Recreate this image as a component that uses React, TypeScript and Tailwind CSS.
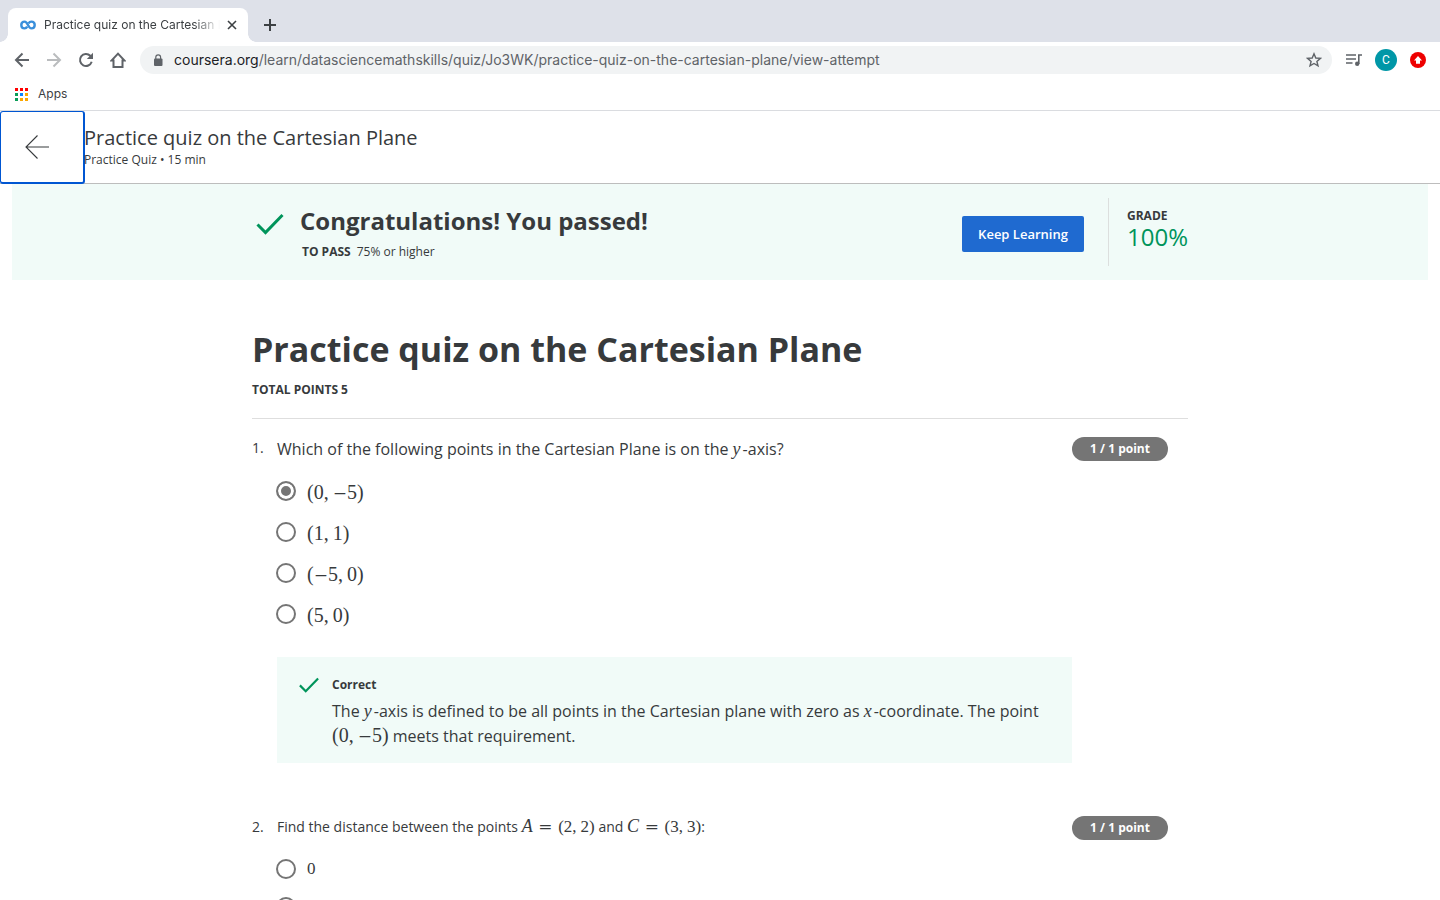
import type { ReactNode } from "react";

type Choice = { id: string; label: ReactNode; checked?: boolean };

function Sym({ children }: { children: ReactNode }) {
  return <span className="mr-[2px] font-['Liberation_Serif',serif] text-[18px] leading-none italic">{children}</span>;
}

function Op({ children }: { children: string }) {
  return <span className="font-['DejaVu_Serif',serif] text-[17px] leading-none">{children}</span>;
}

function Equals() {
  return (
    <span className="mr-[2px]">
      <Op>=</Op>
    </span>
  );
}

function Pair({ a, b, small }: { a: string; b: string; small?: boolean }) {
  const value = (v: string) => (v.startsWith("−") ? <><Op>−</Op>{v.slice(1)}</> : v);
  return (
    <span
      className={
        small
          ? "font-['Liberation_Serif',serif] text-[17px] leading-none whitespace-nowrap"
          : "font-['Liberation_Serif',serif] text-[20px] leading-none whitespace-nowrap"
      }
    >
      ({value(a)},<span className="ml-1">{value(b)}</span>)
    </span>
  );
}

function Check({ className }: { className: string }) {
  return (
    <svg viewBox="0 0 28 22" fill="none" stroke="#00945b" strokeWidth="3" className={className} aria-hidden="true">
      <path d="M1.5 11.5 L9.5 19.5 L26.5 2" />
    </svg>
  );
}

function BrowserTabs() {
  return (
    <div className="flex h-[42px] shrink-0 items-end bg-[#dee1e9] pl-2">
      <div className="relative flex h-[34px] w-60 items-center rounded-t-lg bg-white pr-2 pl-3">
        <span className="absolute bottom-0 -left-2 size-2 bg-[radial-gradient(circle_at_0_0,transparent_7.5px,white_8px)]" />
        <span className="absolute -right-2 bottom-0 size-2 bg-[radial-gradient(circle_at_100%_0,transparent_7.5px,white_8px)]" />
        <svg viewBox="0 0 16 10" className="h-[10px] w-4 shrink-0" fill="none" stroke="#3a8fdb" strokeWidth="2.4" aria-hidden="true">
          <path d="M7.2 6.6 C6.6 7.8 5.8 8.4 4.6 8.4 C2.7 8.4 1.3 7 1.3 5 S2.7 1.6 4.7 1.6 C7.8 1.6 8.2 8.4 11.3 8.4 C13.3 8.4 14.7 7 14.7 5 S13.3 1.6 11.3 1.6 C10 1.6 9.2 2.3 8.6 3.4" />
        </svg>
        <span className="ml-2 flex-1 overflow-hidden text-[12px] whitespace-nowrap text-[#3c4043] [mask-image:linear-gradient(to_right,black_85%,transparent)]">
          Practice quiz on the Cartesian Plane
        </span>
        <button type="button" aria-label="Close tab" className="ml-1 flex size-4 items-center justify-center">
          <svg viewBox="0 0 10 10" className="size-[10px]" stroke="#3c4043" strokeWidth="1.6" aria-hidden="true">
            <path d="M1 1 L9 9 M9 1 L1 9" />
          </svg>
        </button>
      </div>
      <button type="button" aria-label="New tab" className="ml-3 flex h-[34px] w-5 items-center justify-center">
        <svg viewBox="0 0 12 12" className="size-3" stroke="#3c4043" strokeWidth="2" aria-hidden="true">
          <path d="M6 0 V12 M0 6 H12" />
        </svg>
      </button>
    </div>
  );
}

function Toolbar() {
  return (
    <div className="flex h-9 shrink-0 items-center pr-[13px] pl-[10px]">
      <div className="flex gap-2">
        <button type="button" aria-label="Back" className="size-6 p-1">
          <svg viewBox="0 0 16 16" fill="none" stroke="#5f6368" strokeWidth="2" aria-hidden="true">
            <path d="M15 8 H2.5 M8.5 1.5 L2 8 L8.5 14.5" />
          </svg>
        </button>
        <button type="button" aria-label="Forward" className="size-6 p-1">
          <svg viewBox="0 0 16 16" fill="none" stroke="#babcbe" strokeWidth="2" aria-hidden="true">
            <path d="M1 8 H13.5 M7.5 1.5 L14 8 L7.5 14.5" />
          </svg>
        </button>
        <button type="button" aria-label="Reload" className="size-6 p-1">
          <svg viewBox="0 0 16 16" fill="none" stroke="#5f6368" strokeWidth="2" aria-hidden="true">
            <path d="M13.7 9.8 A6 6 0 1 1 12.3 3.8 L13.2 4.8" />
            <path d="M15 0.8 V7 H8.8 Z" fill="#5f6368" stroke="none" />
          </svg>
        </button>
        <button type="button" aria-label="Home" className="size-6 p-1">
          <svg viewBox="0 0 16 16" fill="none" stroke="#5f6368" strokeWidth="2" aria-hidden="true">
            <path d="M1.5 8.6 H3.5 V15 H12.5 V8.6 H14.5 L8 1.6 Z" />
          </svg>
        </button>
      </div>
      <div className="ml-[10px] flex h-7 flex-1 items-center rounded-full bg-[#f1f3f4] pr-[10px] pl-[13px]">
        <svg viewBox="0 0 10 13" className="h-[13px] w-[10px] shrink-0" aria-hidden="true">
          <rect x="1" y="4.5" width="8.5" height="7.5" rx="1" fill="#5f6368" />
          <path d="M2.8 5 V3.2 A2.4 2.4 0 0 1 7.6 3.2 V5" fill="none" stroke="#5f6368" strokeWidth="1.2" />
        </svg>
        <div className="ml-[11px] flex-1 truncate pb-[2px] text-[14px] text-[#5f6368]">
          <span className="text-[#202124]">coursera.org</span>
          /learn/datasciencemathskills/quiz/Jo3WK/practice-quiz-on-the-cartesian-plane/view-attempt
        </div>
        <button type="button" aria-label="Bookmark this page" className="size-4">
          <svg viewBox="0 0 16 16" fill="none" stroke="#5f6368" strokeWidth="1.4" aria-hidden="true">
            <path d="M8 1.8 L9.8 6 L14.4 6.4 L10.9 9.4 L12 13.9 L8 11.5 L4 13.9 L5.1 9.4 L1.6 6.4 L6.2 6 Z" />
          </svg>
        </button>
      </div>
      <button type="button" aria-label="Media controls" className="ml-[14px] h-3 w-4">
        <svg viewBox="0 0 16 12" fill="none" stroke="#5f6368" strokeWidth="1.6" aria-hidden="true">
          <path d="M0 1 H10 M0 5 H10 M0 9 H6.5 M12.8 10 V1 H16" />
          <circle cx="11.2" cy="9.7" r="2.2" fill="#5f6368" stroke="none" />
        </svg>
      </button>
      <button type="button" className="ml-[13px] flex size-[22px] items-center justify-center rounded-full bg-[#0097a7] font-[Roboto,sans-serif] text-[12px] text-white">
        C
      </button>
      <button type="button" aria-label="Update" className="ml-3 flex size-[18px] items-center justify-center">
        <svg viewBox="0 0 16 16" className="size-4" aria-hidden="true">
          <circle cx="8" cy="8" r="8" fill="#ee0000" />
          <path d="M8 4 L12 8.5 H10 V11.7 H6 V8.5 H4 Z" fill="white" />
        </svg>
      </button>
    </div>
  );
}

const dots = [
  "bg-[#f00]", "bg-[#f00]", "bg-[#f00]",
  "bg-[#0a9d58]", "bg-[#0a84ff]", "bg-[#fba700]",
  "bg-[#0a9d58]", "bg-[#fba700]", "bg-[#fba700]",
];

function Bookmarks() {
  return (
    <div className="flex h-[33px] shrink-0 items-center border-b border-[#dadce0] pl-[15px]">
      <a href="#apps" className="flex items-center gap-[10px] text-[12px] text-[#3c4043]">
        <span className="grid grid-cols-3 gap-[2px]">
          {dots.map((c, i) => (
            <span key={i} className={`size-[3px] ${c}`} />
          ))}
        </span>
        Apps
      </a>
    </div>
  );
}

function Question({ no, large, prompt, choices, feedback }: {
  no: number; large?: boolean; prompt: ReactNode; choices: Choice[]; feedback?: ReactNode;
}) {
  return (
    <section className="flex items-start pr-5">
      <span className="w-[25px] shrink-0 text-[14px] leading-[22px]">{no}.</span>
      <div className="flex-1">
        <p className={large ? "text-[16px] leading-6" : "pb-px text-[14px] leading-[22px]"}>{prompt}</p>
        <div className={large ? "mt-5 flex flex-col gap-[21px]" : "mt-5 flex flex-col gap-[18px]"}>
          {choices.map((c) => (
            <label key={c.id} className="-ml-px flex h-5 items-center gap-[11px]">
              <input
                type="radio"
                name={`question-${no}`}
                defaultChecked={c.checked}
                className="size-5 shrink-0 appearance-none rounded-full border-2 border-[#757575] bg-white checked:bg-[#757575] checked:shadow-[inset_0_0_0_3px_white]"
              />
              <span className={large ? "pt-1" : ""}>{c.label}</span>
            </label>
          ))}
        </div>
        {feedback}
      </div>
      <span className="flex h-6 w-24 shrink-0 items-center justify-center rounded-full bg-[#757575] text-[12px] font-bold text-white">
        1 / 1 point
      </span>
    </section>
  );
}

export default function App() {
  return (
    <div className="flex h-screen flex-col overflow-hidden bg-white font-['Open_Sans',sans-serif] text-[#373a3c]">
      <div className="font-[Inter,sans-serif]">
        <BrowserTabs />
        <Toolbar />
        <Bookmarks />
      </div>

      <header className="flex h-[73px] shrink-0 border-b border-[#bdbdbd]">
        <button type="button" aria-label="Back" className="-mb-px flex w-[85px] items-center rounded-[3px] border-2 border-t-1 border-l-1 border-[#0056d2] pl-6">
          <svg viewBox="0 0 24 24" className="size-6" fill="none" stroke="#373a3c" strokeWidth="1.1" aria-hidden="true">
            <path d="M24 12 H1 M12.5 0.5 L1 12 L12.5 23.5" />
          </svg>
        </button>
        <div className="-ml-px pt-[14px]">
          <h2 className="text-[20px] leading-[26px]">Practice quiz on the Cartesian Plane</h2>
          <p className="text-[12px] leading-[18px]">Practice Quiz • 15 min</p>
        </div>
      </header>

      <main className="min-h-0 flex-1 overflow-hidden">
        <div className="mx-3 h-24 bg-[#f1fbf8]">
          <div className="mx-auto flex h-full max-w-[936px] items-center">
            <Check className="mb-4 ml-1 h-[22px] w-7 shrink-0" />
            <div className="ml-4 flex-1 pt-[2px]">
              <h2 className="text-[24px] leading-8 font-bold">Congratulations! You passed!</h2>
              <p className="mt-[6px] ml-[2px] text-[12px] leading-[18px]">
                <strong>TO PASS</strong>
                <span className="ml-[6px]">75% or higher</span>
              </p>
            </div>
            <button type="button" className="mt-1 h-9 w-[122px] rounded-[2px] bg-[#1f6ad0] pt-[2px] text-[13px] font-semibold text-white">
              Keep Learning
            </button>
            <div className="ml-6 h-[68px] w-20 border-l border-[#dcdfde] pt-[11px] pl-[18px]">
              <p className="text-[12px] leading-[14px] font-bold">GRADE</p>
              <p className="text-[24px] leading-[28px] text-[#00945b]">100%</p>
            </div>
          </div>
        </div>

        <article className="mx-auto max-w-[936px] pt-[45px]">
          <h1 className="text-[34px] leading-[48px] font-bold">Practice quiz on the Cartesian Plane</h1>
          <p className="mt-2 text-[12px] leading-[18px] font-bold">TOTAL POINTS 5</p>
          <hr className="mt-[19px] mb-[18px] border-[#dedede]" />

          <Question
            no={1}
            large
            prompt={<>Which of the following points in the Cartesian Plane is on the <Sym>y</Sym>-axis?</>}
            choices={[
              { id: "a", label: <Pair a="0" b="−5" />, checked: true },
              { id: "b", label: <Pair a="1" b="1" /> },
              { id: "c", label: <Pair a="−5" b="0" /> },
              { id: "d", label: <Pair a="5" b="0" /> },
            ]}
            feedback={
              <div className="mt-[33px] mb-[53px] flex bg-[#f1fbf8] px-[21px] pt-[19px] pb-[14px]">
                <Check className="mt-px h-4 w-[22px] shrink-0" />
                <div className="ml-3">
                  <p className="text-[12px] leading-[18px] font-bold">Correct</p>
                  <p className="mt-[5px] text-[16px] leading-[25px]">
                    The <Sym>y</Sym>-axis is defined to be all points in the Cartesian plane with zero as <Sym>x</Sym>-coordinate. The point{" "}
                    <Pair a="0" b="−5" /> meets that requirement.
                  </p>
                </div>
              </div>
            }
          />
          <Question
            no={2}
            prompt={
              <>
                Find the distance between the points <Sym>A</Sym> <Equals /> <Pair a="2" b="2" small /> and{" "}
                <Sym>C</Sym> <Equals /> <Pair a="3" b="3" small />:
              </>
            }
            choices={[
              { id: "a", label: <span className="font-['Liberation_Serif',serif] text-[17px]">0</span> },
              { id: "b", label: <span className="font-['Liberation_Serif',serif] text-[17px]">1</span> },
            ]}
          />
        </article>
      </main>
    </div>
  );
}
